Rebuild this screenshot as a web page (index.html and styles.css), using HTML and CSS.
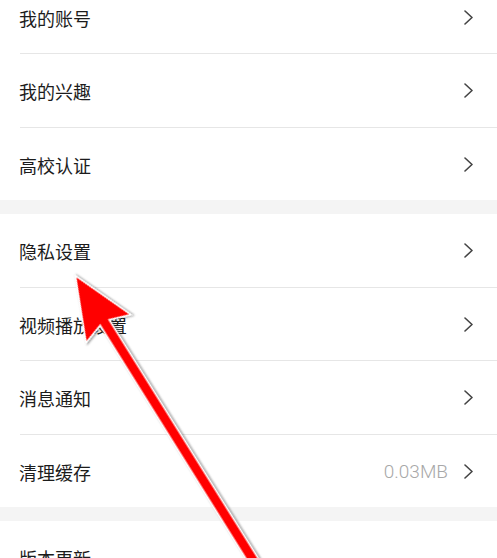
FILE: index.html
```html
<!DOCTYPE html>
<html lang="zh-CN">
<head>
<meta charset="utf-8">
<link rel="stylesheet" href="styles.css">
</head>
<body>
<div class="page">
  <div class="list">
    <div class="group">
      <div class="row"><span class="label">我的账号</span><span class="right"><svg class="chev" viewBox="0 0 9 15"><polyline points="1,1 8,7.5 1,14"/></svg></span></div>
      <div class="row"><span class="label">我的兴趣</span><span class="right"><svg class="chev" viewBox="0 0 9 15"><polyline points="1,1 8,7.5 1,14"/></svg></span></div>
      <div class="row"><span class="label">高校认证</span><span class="right"><svg class="chev" viewBox="0 0 9 15"><polyline points="1,1 8,7.5 1,14"/></svg></span></div>
    </div>
    <div class="gap"></div>
    <div class="group">
      <div class="row"><span class="label">隐私设置</span><span class="right"><svg class="chev" viewBox="0 0 9 15"><polyline points="1,1 8,7.5 1,14"/></svg></span></div>
      <div class="row"><span class="label">视频播放设置</span><span class="right"><svg class="chev" viewBox="0 0 9 15"><polyline points="1,1 8,7.5 1,14"/></svg></span></div>
      <div class="row"><span class="label">消息通知</span><span class="right"><svg class="chev" viewBox="0 0 9 15"><polyline points="1,1 8,7.5 1,14"/></svg></span></div>
      <div class="row"><span class="label">清理缓存</span><span class="right"><span class="value">0.03MB</span><svg class="chev" viewBox="0 0 9 15"><polyline points="1,1 8,7.5 1,14"/></svg></span></div>
    </div>
    <div class="gap"></div>
    <div class="group">
      <div class="row"><span class="label">版本更新</span></div>
    </div>
  </div>
  <svg class="arrow" viewBox="0 0 497 558" width="497" height="558">
    <path transform="translate(76.5,277.5) rotate(-32)" d="M0,0 L25,59 L4.5,52 L4.5,420 L-4.5,420 L-4.5,52 L-25,59 Z"/>
  </svg>
</div>
</body>
</html>
```

FILE: styles.css
```css
html, body {
  margin: 0;
  padding: 0;
  background: #ffffff;
}
.page {
  position: relative;
  width: 497px;
  height: 558px;
  overflow: hidden;
  font-family: "Noto Sans CJK SC", "Noto Sans", sans-serif;
}
.list {
  margin-top: -19.5px;
  display: flex;
  flex-direction: column;
}
.group {
  display: flex;
  flex-direction: column;
  background: #fff;
}
.row {
  box-sizing: border-box;
  height: 73.5px;
  margin-left: 20px;
  padding-right: 24px;
  display: flex;
  align-items: center;
  justify-content: space-between;
  border-bottom: 1px solid #e6e6e6;
}
.row:last-child {
  border-bottom: none;
  height: 72.5px;
}
.label {
  margin-left: -1px;
  font-size: 18px;
  color: #1c1c1c;
  line-height: 1;
  padding-top: 2px;
}
.right {
  display: flex;
  align-items: center;
  gap: 16px;
}
.value {
  font-family: Roboto, "Noto Sans", sans-serif;
  font-weight: 300;
  font-size: 19px;
  color: #a8a8a8;
  padding-top: 1px;
}
.chev {
  width: 9px;
  height: 15px;
  fill: none;
  stroke: #444;
  stroke-width: 1.6;
  stroke-linecap: round;
  stroke-linejoin: round;
  margin-top: 1px;
}
.gap {
  height: 14px;
  background: #f4f4f4;
}
.arrow {
  position: absolute;
  left: 0;
  top: 0;
  pointer-events: none;
}
.arrow path {
  fill: #ff0000;
  stroke: #ffffff;
  stroke-width: 3.5;
  stroke-linejoin: miter;
  paint-order: stroke;
  filter: drop-shadow(1px 1px 1px rgba(0, 0, 0, 0.45));
}
```
